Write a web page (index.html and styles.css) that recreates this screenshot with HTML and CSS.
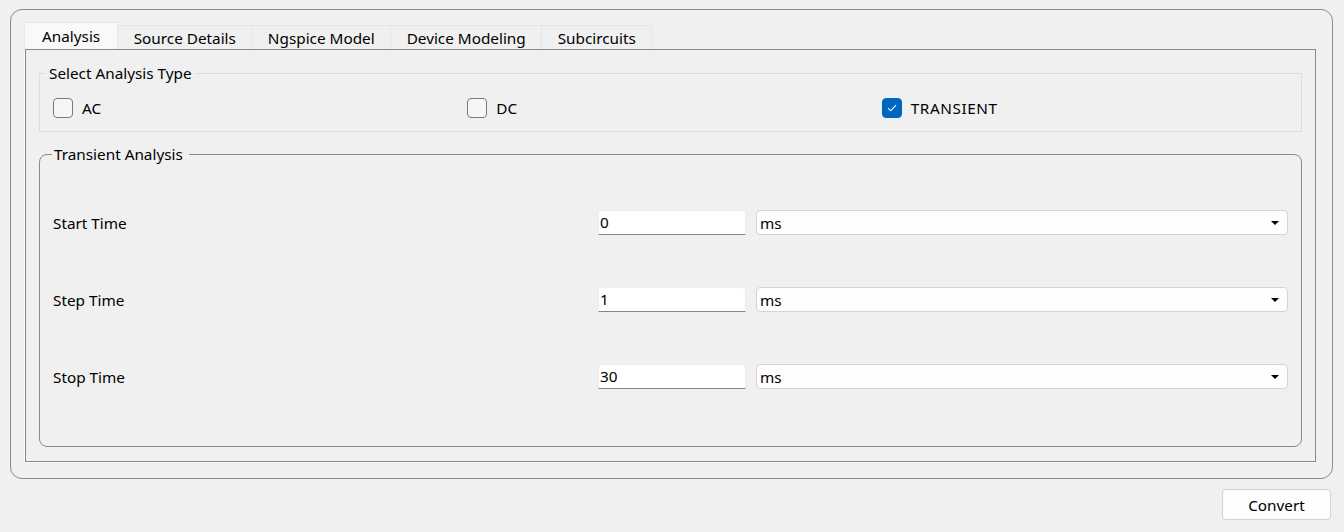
FILE: index.html
```html
<!DOCTYPE html>
<html lang="en">
<head>
<meta charset="utf-8">
<title>Analysis</title>
<link rel="stylesheet" href="styles.css">
</head>
<body>
<div class="frame">
  <div class="tabs">
    <div class="tab active">Analysis</div>
    <div class="tab">Source Details</div>
    <div class="tab">Ngspice Model</div>
    <div class="tab">Device Modeling</div>
    <div class="tab">Subcircuits</div>
  </div>
  <div class="pane">
    <fieldset class="group group-light">
      <legend class="legend-select">Select Analysis Type</legend>
      <div class="types">
        <label class="check"><span class="box"></span><span>AC</span></label>
        <label class="check"><span class="box"></span><span>DC</span></label>
        <label class="check"><span class="box checked"><svg width="10" height="8" viewBox="0 0 10 8"><path d="M1 4.2 L3.7 6.8 L9 1.2" fill="none" stroke="#fff" stroke-width="1.1"/></svg></span><span class="caps">TRANSIENT</span></label>
      </div>
    </fieldset>
    <fieldset class="group group-dark">
      <legend class="legend-trans">Transient Analysis</legend>
      <div class="rows">
        <div class="row">
          <span class="lbl">Start Time</span>
          <div class="field">0</div>
          <div class="combo"><span>ms</span><span class="arrow"></span></div>
        </div>
        <div class="row">
          <span class="lbl">Step Time</span>
          <div class="field">1</div>
          <div class="combo"><span>ms</span><span class="arrow"></span></div>
        </div>
        <div class="row">
          <span class="lbl">Stop Time</span>
          <div class="field">30</div>
          <div class="combo"><span>ms</span><span class="arrow"></span></div>
        </div>
      </div>
    </fieldset>
  </div>
</div>
<div class="footer">
  <button class="btn">Convert</button>
</div>
</body>
</html>
```

FILE: styles.css
```css
* { box-sizing: border-box; }
html, body { margin: 0; padding: 0; }
body {
  background: #f0f0f0;
  font-family: "Noto Sans", "Open Sans", sans-serif;
  font-size: 15.3px;
  color: #000;
  width: 1344px;
  height: 532px;
  overflow: hidden;
}
.frame {
  margin: 9px 11px 0 10px;
  border: 1px solid #8a8a8a;
  border-radius: 12px;
  padding: 12px 16px 16px 14px;
}
.tabs {
  display: flex;
  align-items: flex-end;
  height: 27px;
  position: relative;
  z-index: 1;
  margin-left: -1px;
}
.tab {
  height: 24px;
  line-height: 24px;
  padding: 0 15.5px;
  background: #f0f0f0;
  border: 1px solid #e6e6e6;
  border-bottom: none;
  border-left: none;
  white-space: nowrap;
}
.tab.active {
  height: 27px;
  line-height: 26px;
  background: #f9f9f9;
  border-left: 1px solid #e6e6e6;
  padding: 0 17px;
}
.pane {
  border: 1px solid #898989;
  box-shadow: -1px 1px 0 #fbfbfb;
  padding: 13px 13px 14px 13px;
}
.group {
  margin: 0;
  min-width: 0;
}
.group legend {
  line-height: 21px;
  height: 20px;
  padding: 0 3px;
}
.group-light {
  border: 1px solid #dcdcdc;
  padding: 0 5px 13px 13px;
}
.legend-select { margin-left: -7px; }
.group-dark {
  margin-top: 12px;
  border: 1px solid #8a8a8a;
  border-radius: 8px;
  padding: 46px 13px 57px 13px;
}
.legend-trans { margin-left: -1px; padding: 0 6px 0 2px !important; }
.types {
  margin-top: 15px;
  display: grid;
  grid-template-columns: repeat(3, 1fr);
}
.check {
  display: flex;
  align-items: center;
  gap: 9px;
  height: 20px;
}
.caps { letter-spacing: 0.6px; }
.box {
  width: 20px;
  height: 20px;
  border: 1px solid #7a7a7a;
  border-radius: 4px;
  background: #f6f6f6;
  display: flex;
  align-items: center;
  justify-content: center;
}
.box.checked {
  background: #0067c0;
  border-color: #0067c0;
}
.rows {
  display: flex;
  flex-direction: column;
  gap: 52px;
}
.row {
  display: grid;
  grid-template-columns: 1fr 148px 532px;
  column-gap: 10px;
  align-items: center;
  height: 25px;
}
.field {
  height: 25px;
  background: #fff;
  border: 1px solid #ececec;
  border-bottom: 1px solid #868686;
  border-radius: 3px 3px 0 0;
  padding: 0 1px;
  line-height: 23px;
}
.combo {
  height: 25px;
  background: #fdfdfd;
  border: 1px solid #d4d4d4;
  border-radius: 4px;
  padding: 0 8px 0 3px;
  display: flex;
  align-items: center;
  justify-content: space-between;
}
.arrow {
  width: 0;
  height: 0;
  border-left: 4px solid transparent;
  border-right: 4px solid transparent;
  border-top: 4px solid #000;
}
.footer {
  display: flex;
  justify-content: flex-end;
  padding: 10px 13px 0 0;
}
.btn {
  width: 109px;
  height: 31px;
  background: #fdfdfd;
  border: 1px solid #d2d2d2;
  border-radius: 4px;
  font-family: inherit;
  font-size: 15.3px;
  color: #000;
}
```
